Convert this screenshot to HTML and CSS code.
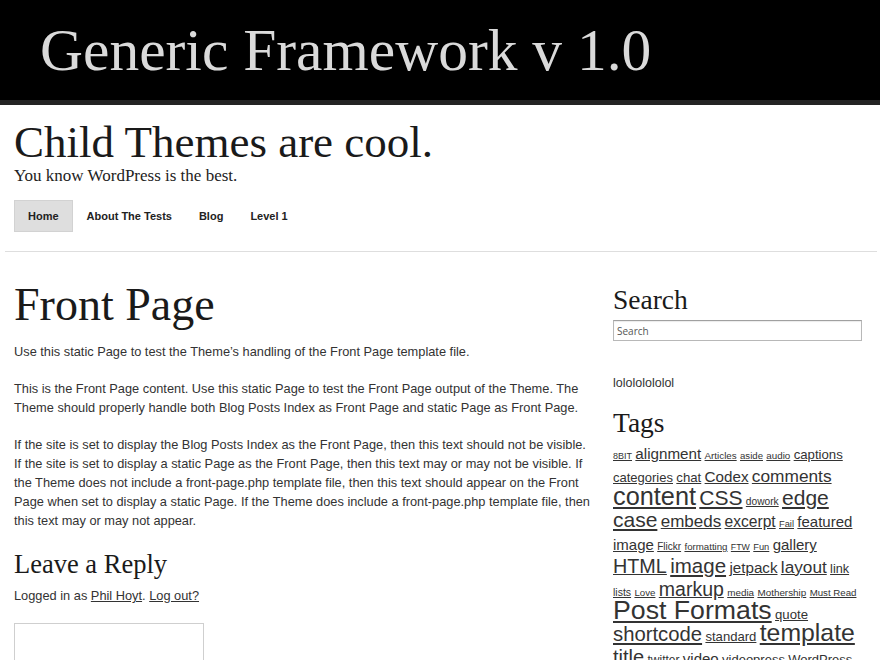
FILE: index.html
```html
<!DOCTYPE html>
<html>
<head>
<meta charset="utf-8">
<title>Generic Framework</title>
<link rel="stylesheet" href="styles.css">
</head>
<body>
<header class="topbar">
  <div class="brand">Generic Framework v 1.0</div>
</header>
<div class="wrap">
  <div class="site-head">
    <h1 class="site-title">Child Themes are cool.</h1>
    <div class="tagline">You know WordPress is the best.</div>
    <ul class="nav">
      <li class="current"><a href="#">Home</a></li>
      <li><a href="#">About The Tests</a></li>
      <li><a href="#">Blog</a></li>
      <li><a href="#">Level 1</a></li>
    </ul>
  </div>
  <div class="rule"></div>
  <div class="content">
    <main class="main">
      <h1 class="page-title">Front Page</h1>
      <p>Use this static Page to test the Theme’s handling of the Front Page template file.</p>
      <p>This is the Front Page content. Use this static Page to test the Front Page output of the Theme. The Theme should properly handle both Blog Posts Index as Front Page and static Page as Front Page.</p>
      <p>If the site is set to display the Blog Posts Index as the Front Page, then this text should not be visible. If the site is set to display a static Page as the Front Page, then this text may or may not be visible. If the Theme does not include a front-page.php template file, then this text should appear on the Front Page when set to display a static Page. If the Theme does include a front-page.php template file, then this text may or may not appear.</p>
      <h2 class="reply-title">Leave a Reply</h2>
      <p class="logged">Logged in as <a href="#">Phil Hoyt</a>. <a href="#">Log out?</a></p>
      <textarea class="comment"></textarea>
    </main>
    <aside class="sidebar">
      <h3 class="widget-title">Search</h3>
      <input class="search" type="text" placeholder="Search">
      <p class="lol">lolololololol</p>
      <h3 class="widget-title tags-title">Tags</h3>
      <div class="cloud">
        <a href="#" style="font-size:9px">8BIT</a>
        <a href="#" style="font-size:15.2px">alignment</a>
        <a href="#" style="font-size:9.8px">Articles</a>
        <a href="#" style="font-size:9.6px">aside</a>
        <a href="#" style="font-size:9.8px">audio</a>
        <a href="#" style="font-size:13.2px">captions</a>
        <a href="#" style="font-size:13px">categories</a>
        <a href="#" style="font-size:13.2px">chat</a>
        <a href="#" style="font-size:15.2px">Codex</a>
        <a href="#" style="font-size:17.3px">comments</a>
        <a href="#" style="font-size:25.3px">content</a>
        <a href="#" style="font-size:21px">CSS</a>
        <a href="#" style="font-size:10.2px">dowork</a>
        <a href="#" style="font-size:21px">edge case</a>
        <a href="#" style="font-size:17px">embeds</a>
        <a href="#" style="font-size:15.6px">excerpt</a>
        <a href="#" style="font-size:9.3px">Fail</a>
        <a href="#" style="font-size:15px">featured image</a>
        <a href="#" style="font-size:10px">Flickr</a>
        <a href="#" style="font-size:9.7px">formatting</a>
        <a href="#" style="font-size:8.8px">FTW</a>
        <a href="#" style="font-size:9.3px">Fun</a>
        <a href="#" style="font-size:15px">gallery</a>
        <a href="#" style="font-size:19.8px">HTML</a>
        <a href="#" style="font-size:20.5px">image</a>
        <a href="#" style="font-size:15.2px">jetpack</a>
        <a href="#" style="font-size:17.2px">layout</a>
        <a href="#" style="font-size:12.7px">link</a>
        <a href="#" style="font-size:10.5px">lists</a>
        <a href="#" style="font-size:9.7px">Love</a>
        <a href="#" style="font-size:19.5px">markup</a>
        <a href="#" style="font-size:9.9px">media</a>
        <a href="#" style="font-size:9.9px">Mothership</a>
        <a href="#" style="font-size:9.7px">Must Read</a>
        <a href="#" style="font-size:26.7px">Post Formats</a>
        <a href="#" style="font-size:13.2px">quote</a>
        <a href="#" style="font-size:20.3px">shortcode</a>
        <a href="#" style="font-size:13.1px">standard</a>
        <a href="#" style="font-size:24.8px">template</a>
        <a href="#" style="font-size:20px">title</a>
        <a href="#" style="font-size:12px">twitter</a>
        <a href="#" style="font-size:15px">video</a>
        <a href="#" style="font-size:13px">videopress</a>
        <a href="#" style="font-size:13px">WordPress</a>
      </div>
    </aside>
  </div>
</div>
</body>
</html>
```

FILE: styles.css
```css
html, body {
  margin: 0;
  padding: 0;
  background: #fff;
}
body {
  font-family: "Liberation Sans", Arial, sans-serif;
  color: #333;
  overflow: hidden;
}
.topbar {
  background: #000;
  height: 100px;
  border-bottom: 5px solid #232323;
  padding-left: 40px;
}
.brand {
  font-family: "Liberation Serif", "Times New Roman", serif;
  font-size: 59.5px;
  line-height: 1;
  color: #dadada;
  padding-top: 21px;
  white-space: nowrap;
}
.wrap {
  padding: 0 3px 0 5px;
}
.site-head {
  padding: 15px 9px 0;
}
.site-title {
  font-family: "Liberation Serif", "Times New Roman", serif;
  font-weight: normal;
  font-size: 45px;
  line-height: 45px;
  color: #1a1a1a;
  margin: 0;
}
.tagline {
  font-family: "Liberation Serif", "Times New Roman", serif;
  font-size: 17px;
  line-height: 20px;
  color: #222;
  margin-top: 1px;
}
.nav {
  display: flex;
  list-style: none;
  margin: 14px 0 0;
  padding: 0;
}
.nav a {
  display: block;
  padding: 10px 13px 10px 14px;
  font-size: 11px;
  line-height: 12px;
  font-weight: bold;
  color: #222;
  text-decoration: none;
}
.nav .current a {
  background: #dedede;
  padding-right: 14px;
  box-shadow: inset 0 0 0 1px #d2d2d2;
}
.rule {
  border-top: 1px solid #dedede;
  margin-top: 19px;
}
.content {
  display: grid;
  grid-template-columns: 580px 250px;
  column-gap: 19px;
  padding-left: 9px;
}
.main {
  padding-top: 30px;
  font-size: 12.8px;
  line-height: 19px;
}
.page-title {
  font-family: "Liberation Serif", "Times New Roman", serif;
  font-weight: normal;
  font-size: 46px;
  line-height: 46px;
  color: #1a1a1a;
  margin: 0 0 14px;
}
.main p {
  margin: 0 0 18px;
}
.reply-title {
  font-family: "Liberation Serif", "Times New Roman", serif;
  font-weight: normal;
  font-size: 26.5px;
  line-height: 26px;
  color: #1a1a1a;
  margin: 21px 0 9px;
}
.main a {
  color: #333;
  text-decoration: underline;
}
.comment {
  display: block;
  box-sizing: border-box;
  width: 190px;
  height: 100px;
  border: 1px solid #cfcfcf;
  margin: 0;
  padding: 0;
  resize: none;
}
.sidebar {
  padding-top: 34px;
}
.widget-title {
  font-family: "Liberation Serif", "Times New Roman", serif;
  font-weight: normal;
  font-size: 27.5px;
  line-height: 27px;
  color: #1a1a1a;
  margin: 0 0 7px;
}
.search {
  display: block;
  box-sizing: border-box;
  width: 249px;
  height: 21px;
  margin: 0;
  padding: 0 3px;
  border: 1px solid #b8b8b8;
  border-top-color: #a0a0a0;
  box-shadow: inset 0 1px 1px rgba(0,0,0,0.08);
  font-family: "Open Sans", sans-serif;
  font-size: 10px;
  color: #555;
  outline: none;
}
.search::placeholder {
  color: #555;
}
.lol {
  font-size: 12.5px;
  line-height: 19px;
  margin: 33px 0 16px;
}
.tags-title {
  margin-bottom: 8px;
}
.cloud {
  font-size: 12px;
  line-height: 22.8px;
}
.cloud a {
  color: #333;
  text-decoration: underline;
  line-height: 0;
}
```
